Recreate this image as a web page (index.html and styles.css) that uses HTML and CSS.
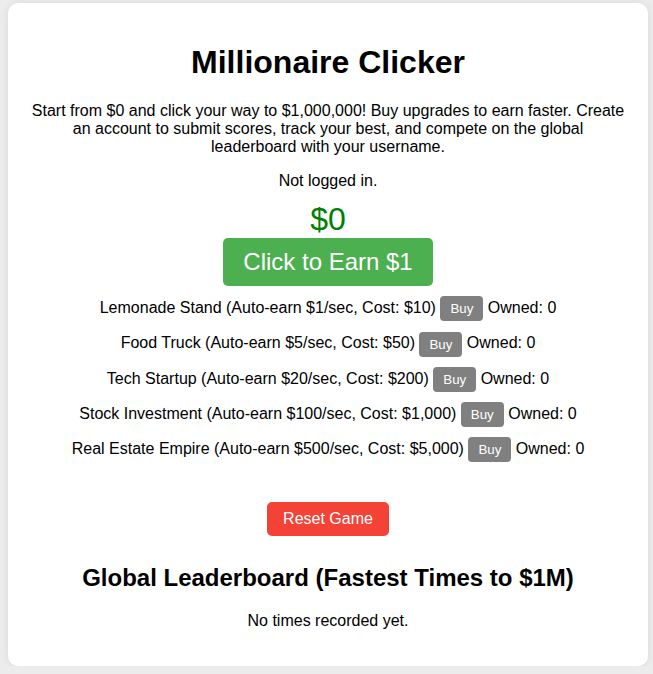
FILE: index.html
```html
<!DOCTYPE html>
<html lang="en">
<head>
<meta charset="utf-8">
<title>Millionaire Clicker</title>
<link rel="stylesheet" href="styles.css">
</head>
<body>
<div class="container">
  <h1 class="title">Millionaire Clicker</h1>
  <p class="intro">Start from $0 and click your way to $1,000,000! Buy upgrades to earn faster. Create an account to submit scores, track your best, and compete on the global leaderboard with your username.</p>
  <p class="status">Not logged in.</p>
  <div class="money">$0</div>
  <button class="earn">Click to Earn $1</button>
  <div class="upgrades">
    <div class="upgrade">Lemonade Stand (Auto-earn $1/sec, Cost: $10) <button class="buy">Buy</button> Owned: 0</div>
    <div class="upgrade">Food Truck (Auto-earn $5/sec, Cost: $50) <button class="buy">Buy</button> Owned: 0</div>
    <div class="upgrade">Tech Startup (Auto-earn $20/sec, Cost: $200) <button class="buy">Buy</button> Owned: 0</div>
    <div class="upgrade">Stock Investment (Auto-earn $100/sec, Cost: $1,000) <button class="buy">Buy</button> Owned: 0</div>
    <div class="upgrade">Real Estate Empire (Auto-earn $500/sec, Cost: $5,000) <button class="buy">Buy</button> Owned: 0</div>
  </div>
  <button class="reset">Reset Game</button>
  <h2 class="board-title">Global Leaderboard (Fastest Times to $1M)</h2>
  <p class="empty">No times recorded yet.</p>
</div>
</body>
</html>
```

FILE: styles.css
```css
html, body {
  margin: 0;
  padding: 0;
}
body {
  background: #ececec;
  font-family: "Liberation Sans", Arial, sans-serif;
  color: #000;
  padding: 3px 0 0 8px;
}
.container {
  box-sizing: border-box;
  width: 640px;
  height: 663px;
  background: #fff;
  border-radius: 10px;
  box-shadow: 0 0 8px rgba(0, 0, 0, 0.08);
  padding: 20px;
  text-align: center;
  display: flex;
  flex-direction: column;
  align-items: center;
}
.title {
  font-size: 32px;
  line-height: 37px;
  margin: 21px 0 0;
}
.intro {
  font-size: 16px;
  line-height: 18px;
  margin: 21px 0 0;
}
.status {
  font-size: 16px;
  line-height: 18px;
  margin: 16px 0 0;
}
.money {
  font-size: 32px;
  line-height: 37px;
  color: #008000;
  margin-top: 11px;
}
.earn {
  font-family: inherit;
  font-size: 24px;
  line-height: 28px;
  color: #fff;
  background: #4caf50;
  border: none;
  border-radius: 5px;
  padding: 10px 20px;
  margin-top: 0;
}
.upgrades {
  margin-top: 8px;
  display: flex;
  flex-direction: column;
  gap: 8px;
}
.upgrade {
  font-size: 16px;
  line-height: 27px;
}
.buy {
  font-family: inherit;
  font-size: 13.33px;
  line-height: 15px;
  color: #fff;
  background: #808080;
  border: none;
  border-radius: 4px;
  padding: 5px 10px;
  vertical-align: middle;
}
.reset {
  font-family: inherit;
  font-size: 16px;
  line-height: 18px;
  color: #fff;
  background: #f44336;
  border: none;
  border-radius: 5px;
  padding: 8px 16px;
  margin-top: 40px;
}
.board-title {
  font-size: 24px;
  line-height: 28px;
  margin: 28px 0 0;
}
.empty {
  font-size: 16px;
  line-height: 18px;
  margin: 20px 0 0;
}
```
